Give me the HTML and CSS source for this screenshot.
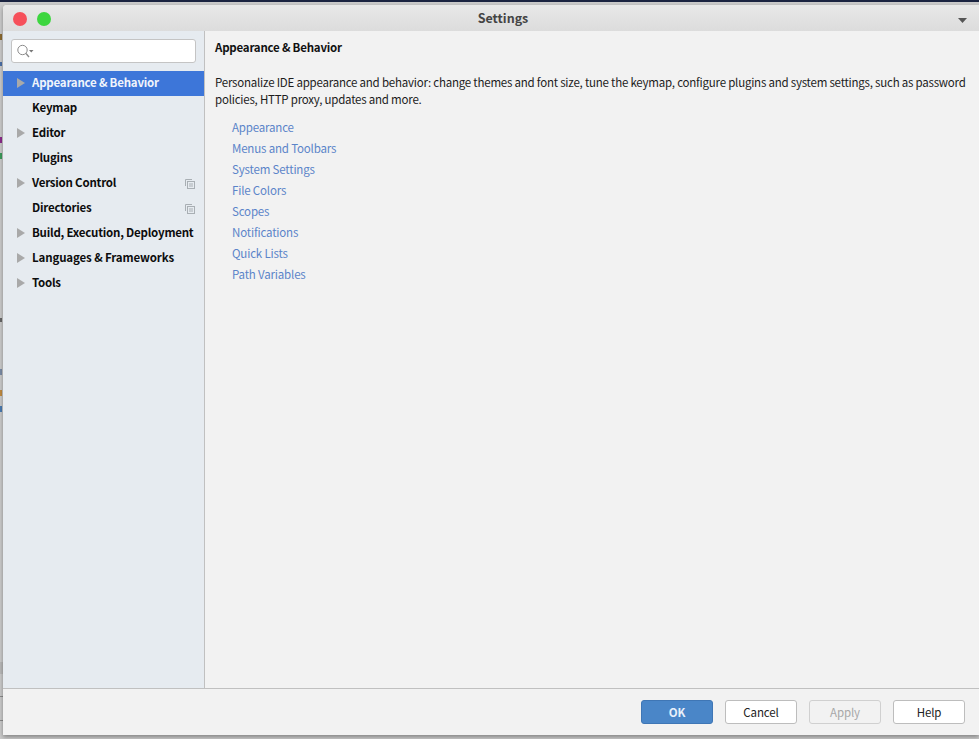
FILE: index.html
```html
<!DOCTYPE html>
<html lang="en">
<head>
<meta charset="utf-8">
<title>Settings</title>
<link rel="stylesheet" href="styles.css">
</head>
<body>
<div class="desktop">
  <span class="speck s1"></span>
  <span class="speck s2"></span>
  <span class="speck s3"></span>
  <span class="speck s4"></span>
  <span class="speck s5"></span>
  <span class="speck s6"></span>
  <span class="speck s7"></span>
  <span class="speck s8"></span>
  <span class="speck s9"></span>
  <span class="speck s10"></span>
  <span class="speck s11"></span>
  <div class="window">
    <header class="titlebar">
      <div class="lights"><span class="light red"></span><span class="light green"></span></div>
      <div class="title">Settings</div>
      <svg class="menu-arrow" width="9" height="5" viewBox="0 0 9 5"><path d="M0 0h9L4.500 5z" fill="#555"/></svg>
    </header>
    <div class="body">
      <aside class="sidebar">
        <div class="search">
          <svg width="18" height="16" viewBox="0 0 18 16" fill="none"><circle cx="5.500" cy="7" r="4.700" stroke="#8a8a8a"/><path d="M9 10.500l3 3.500" stroke="#8a8a8a" stroke-width="1.300"/><path d="M12 7h4.500l-2.250 2.500z" fill="#777"/></svg>
        </div>
        <nav class="tree">
          <div class="row selected"><span class="arrow"></span><span class="label">Appearance &amp; Behavior</span></div>
          <div class="row"><span class="label">Keymap</span></div>
          <div class="row"><span class="arrow"></span><span class="label">Editor</span></div>
          <div class="row"><span class="label">Plugins</span></div>
          <div class="row"><span class="arrow"></span><span class="label">Version Control</span>
            <svg class="copy" width="10" height="10" viewBox="0 0 10 10" fill="none" stroke="#a9afb4"><path d="M.5 7V.5H7"/><rect x="2.500" y="2.500" width="7" height="7"/><path d="M4 5h4M4 7h4"/></svg></div>
          <div class="row"><span class="label">Directories</span>
            <svg class="copy" width="10" height="10" viewBox="0 0 10 10" fill="none" stroke="#a9afb4"><path d="M.5 7V.5H7"/><rect x="2.500" y="2.500" width="7" height="7"/><path d="M4 5h4M4 7h4"/></svg></div>
          <div class="row"><span class="arrow"></span><span class="label">Build, Execution, Deployment</span></div>
          <div class="row"><span class="arrow"></span><span class="label wide">Languages &amp; Frameworks</span></div>
          <div class="row"><span class="arrow"></span><span class="label">Tools</span></div>
        </nav>
      </aside>
      <main class="content">
        <h1 class="heading">Appearance &amp; Behavior</h1>
        <p class="desc">Personalize IDE appearance and behavior: change themes and font size, tune the keymap, configure plugins and system settings, such as password policies, HTTP proxy, updates and more.</p>
        <ul class="links">
          <li>Appearance</li>
          <li>Menus and Toolbars</li>
          <li>System Settings</li>
          <li>File Colors</li>
          <li>Scopes</li>
          <li>Notifications</li>
          <li>Quick Lists</li>
          <li>Path Variables</li>
        </ul>
      </main>
    </div>
    <footer class="footer">
      <button class="btn primary">OK</button>
      <button class="btn">Cancel</button>
      <button class="btn disabled">Apply</button>
      <button class="btn">Help</button>
    </footer>
  </div>
</div>
</body>
</html>
```
FILE: styles.css
```css
* { box-sizing: border-box; }
html, body { margin: 0; height: 100%; }
body { overflow: hidden; background: #c9c9c9; font-family: "Noto Sans CJK SC", "Noto Sans", sans-serif; font-size: 11.5px; letter-spacing: -0.17px; color: #111; }
.desktop { position: relative; width: 979px; height: 739px; padding: 3px 0 4px 3px; border-top: 2px solid #1a2340; background: #cacaca; }
.speck { position: absolute; left: 0; width: 2px; height: 6px; }
.s1 { top: 32px; background: #8a6a30; }
.s2 { top: 60px; height: 4px; background: #4a6fa8; }
.s3 { top: 135px; background: #8a2a8a; }
.s4 { top: 151px; background: #3a9a5a; }
.s5 { top: 316px; height: 4px; background: #666; }
.s6 { top: 367px; background: #7a8aa5; }
.s7 { top: 388px; background: #c08a40; }
.s8 { top: 404px; background: #4a7ab0; }
.s9 { top: 660px; left: 0; width: 3px; height: 12px; background: #b8b8b8; }
.s10 { top: 694px; width: 3px; height: 1px; background: #8a8a8a; }
.s11 { top: 718px; width: 3px; height: 1px; background: #8a8a8a; }
.window { position: relative; height: 100%; display: flex; flex-direction: column; background: #f2f2f2; box-shadow: 0 2px 4px rgba(0,0,0,.35); border-radius: 4px 0 0 0; overflow: hidden; }
.titlebar { flex: none; height: 26px; display: flex; align-items: center; justify-content: center; position: relative; background: linear-gradient(#e8e8e8, #dcdcdc); }
.lights { position: absolute; left: 10px; top: 7px; display: flex; gap: 10px; }
.light { width: 14px; height: 14px; border-radius: 50%; }
.red { background: #f6505a; }
.green { background: #3dd63f; }
.title { font-weight: 700; font-size: 12.500px; letter-spacing: 0; line-height: 16px; padding-bottom: 1px; color: #444; padding-left: 24px; }
.menu-arrow { position: absolute; right: 12px; top: 13px; }
.body { flex: 1; min-height: 0; display: flex; }
.sidebar { flex: none; width: 202px; background: #e6ebf0; border-right: 1px solid #c0c0c0; }
.search { height: 24px; margin: 8px; padding: 3px 0 0 5px; background: #fff; border: 1px solid #c4c4c4; border-radius: 3px; }
.search svg { display: block; }
.tree { display: flex; flex-direction: column; }
.row { height: 25px; position: relative; display: flex; align-items: center; padding-left: 29px; font-weight: 700; line-height: 23px; padding-bottom: 2px; letter-spacing: -0.22px; color: #0d0d0d; white-space: nowrap; }
.row.selected { background: #3d76d9; color: #f0f4fb; }
.label.wide { letter-spacing: -0.13px; }
.arrow { position: absolute; left: 14px; top: 7px; width: 0; height: 0; border-left: 8px solid #a9a9a9; border-top: 5px solid transparent; border-bottom: 5px solid transparent; }
.copy { position: absolute; left: 182px; top: 8px; }
.content { flex: 1; min-width: 0; padding: 8px 5px 0 10px; }
.heading { margin: 0; font-size: 11.500px; line-height: 16px; font-weight: 700; letter-spacing: -0.22px; color: #111; }
.desc { margin: 19px 0 0; line-height: 17px; letter-spacing: -0.22px; color: #1c1c1c; }
.links { list-style: none; margin: 9px 0 0; padding: 0 0 0 17px; color: #5b84c9; }
.links li { height: 21px; line-height: 21px; }
.footer { flex: none; height: 47px; display: flex; justify-content: flex-end; align-items: flex-start; gap: 12px; padding: 11px 14px 0 0; border-top: 1px solid #c0c0c0; background: #f2f2f2; }
.btn { width: 72px; height: 24px; padding: 0; font: 11.500px "Noto Sans CJK SC", "Noto Sans", sans-serif; letter-spacing: -0.1px; color: #222; background: #fff; border: 1px solid #bdbdbd; border-radius: 3px; }
.primary { background: #4a86c8; border-color: #3f76b5; color: #e8f0fa; font-weight: 700; }
.disabled { background: #f2f2f2; border-color: #d0d0d0; color: #a8a8a8; }
```
